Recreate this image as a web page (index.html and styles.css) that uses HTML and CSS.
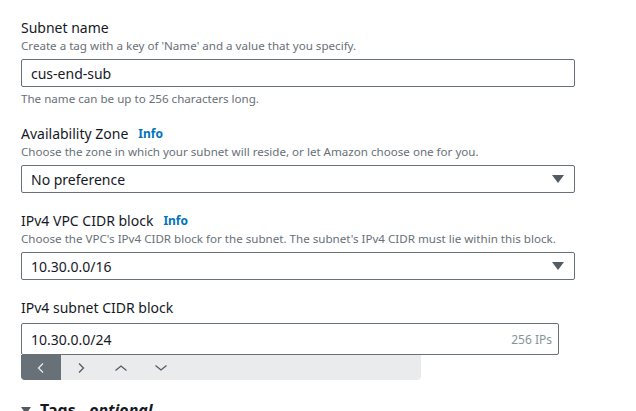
FILE: index.html
```html
<!DOCTYPE html>
<html>
<head>
<meta charset="utf-8">
<link rel="stylesheet" href="styles.css">
</head>
<body>
<div class="form">
  <div class="field f1">
    <div class="label">Subnet name</div>
    <div class="desc">Create a tag with a key of 'Name' and a value that you specify.</div>
    <div class="input">cus-end-sub</div>
    <div class="hint">The name can be up to 256 characters long.</div>
  </div>
  <div class="field">
    <div class="label">Availability Zone <span class="info">Info</span></div>
    <div class="desc">Choose the zone in which your subnet will reside, or let Amazon choose one for you.</div>
    <div class="input select">No preference<span class="caret"></span></div>
  </div>
  <div class="field">
    <div class="label">IPv4 VPC CIDR block <span class="info">Info</span></div>
    <div class="desc">Choose the VPC's IPv4 CIDR block for the subnet. The subnet's IPv4 CIDR must lie within this block.</div>
    <div class="input select">10.30.0.0/16<span class="caret"></span></div>
  </div>
  <div class="field">
    <div class="label lbl-tight">IPv4 subnet CIDR block</div>
    <div class="input cidr">10.30.0.0/24<span class="ips">256 IPs</span></div>
    <div class="toolbar">
      <div class="tb active"><svg width="10" height="12" viewBox="0 0 10 12"><path d="M7 1.5 L2.5 6 L7 10.5" fill="none" stroke="#e9ebed" stroke-width="1.3"/></svg></div>
      <div class="tb"><svg width="10" height="12" viewBox="0 0 10 12"><path d="M3 1.5 L7.5 6 L3 10.5" fill="none" stroke="#545b64" stroke-width="1.3"/></svg></div>
      <div class="tb"><svg width="14" height="10" viewBox="0 0 14 10"><path d="M1.5 7.5 L7 3 L12.5 7.5" fill="none" stroke="#545b64" stroke-width="1.3"/></svg></div>
      <div class="tb"><svg width="14" height="10" viewBox="0 0 14 10"><path d="M1.5 2.5 L7 7 L12.5 2.5" fill="none" stroke="#545b64" stroke-width="1.3"/></svg></div>
    </div>
  </div>
  <div class="tags"><span class="tri"></span><b>Tags - <i>optional</i></b></div>
</div>
</body>
</html>
```
FILE: styles.css
```css
* { box-sizing: border-box; }
html, body { margin: 0; padding: 0; background: #ffffff; }
body {
  font-family: "Noto Sans", "Open Sans", Arial, sans-serif;
  color: #16191f;
  overflow: hidden;
}
.form {
  padding: 18px 0 0 21px;
  width: 575px;
  display: flex;
  flex-direction: column;
}
.field { display: flex; flex-direction: column; margin-bottom: 18px; }
.field.f1 { margin-bottom: 17px; }
.label {
  font-size: 14px;
  line-height: 20px;
  color: #16191f;
  display: flex;
  align-items: center;
}
.label.lbl-tight { margin-bottom: 5px; }
.info {
  color: #0073bb;
  font-size: 12px;
  font-weight: 700;
  margin-left: 10px;
}
.desc {
  font-size: 11.6px;
  line-height: 16px;
  color: #687078;
  margin-bottom: 5px;
}
.input {
  height: 28px;
  border: 1px solid #687078;
  border-radius: 2px;
  padding: 0 9px;
  font-size: 14px;
  display: flex;
  align-items: center;
  color: #16191f;
}
.select { justify-content: space-between; }
.caret {
  width: 0; height: 0;
  border-left: 6px solid transparent;
  border-right: 6px solid transparent;
  border-top: 8px solid #545b64;
  margin-right: 1px;
}
.hint {
  font-size: 11.6px;
  line-height: 16px;
  color: #687078;
  margin-top: 4px;
}
.cidr {
  width: 538px;
  height: 32px;
  justify-content: space-between;
  padding-right: 6px;
}
.ips { font-size: 12px; color: #879596; }
.toolbar {
  width: 400px;
  height: 25px;
  background: #e9ebed;
  border-radius: 0 0 4px 4px;
  display: flex;
  overflow: hidden;
}
.tb {
  width: 40px;
  display: flex;
  align-items: center;
  justify-content: center;
}
.tb.active { background: #687078; }
.tags {
  margin-top: 2px;
  font-size: 16px;
  line-height: 20px;
  display: flex;
  align-items: center;
  color: #16191f;
}
.tri {
  width: 0; height: 0;
  border-left: 5px solid transparent;
  border-right: 5px solid transparent;
  border-top: 7px solid #545b64;
  margin-right: 9px;
}
```
